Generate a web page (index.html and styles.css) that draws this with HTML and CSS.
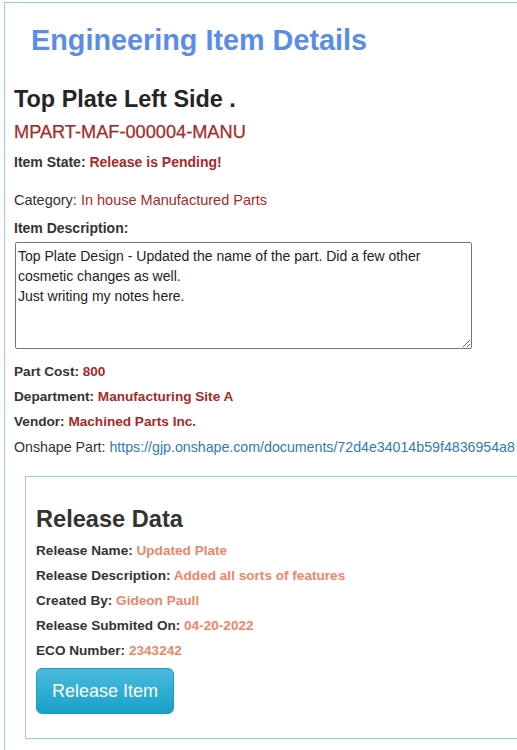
FILE: index.html
```html
<!DOCTYPE html>
<html>
<head>
<meta charset="utf-8">
<link rel="stylesheet" href="styles.css">
</head>
<body>
<div class="panel">
  <h1 class="title">Engineering Item Details</h1>
  <h3 class="item-name">Top Plate Left Side .</h3>
  <div class="item-number">MPART-MAF-000004-MANU</div>
  <div class="row bold state">Item State: <span class="val-red">Release is Pending!</span></div>
  <div class="row category">Category: <span class="val-red">In house Manufactured Parts</span></div>
  <div class="row bold desc-label">Item Description:</div>
  <textarea class="desc">Top Plate Design - Updated the name of the part. Did a few other cosmetic changes as well.
Just writing my notes here.</textarea>
  <div class="fields">
    <div class="row field semi">Part Cost: <span class="val-red">800</span></div>
    <div class="row field semi">Department: <span class="val-red">Manufacturing Site A</span></div>
    <div class="row field semi">Vendor: <span class="val-red">Machined Parts Inc.</span></div>
    <div class="row field onshape">Onshape Part: <a class="link" href="#">https://gjp.onshape.com/documents/72d4e34014b59f4836954a8</a></div>
  </div>
  <div class="release">
    <h3 class="release-title">Release Data</h3>
    <div class="rfield">Release Name: <span class="val-salmon">Updated Plate</span></div>
    <div class="rfield">Release Description: <span class="val-salmon">Added all sorts of features</span></div>
    <div class="rfield">Created By: <span class="val-salmon">Gideon Paull</span></div>
    <div class="rfield">Release Submited On: <span class="val-salmon">04-20-2022</span></div>
    <div class="rfield">ECO Number: <span class="val-salmon">2343242</span></div>
    <button class="btn">Release Item</button>
  </div>
</div>
</body>
</html>
```
FILE: styles.css
```css
html, body {
  margin: 0;
  padding: 0;
  overflow: hidden;
  background: #fff;
}
body {
  font-family: "Liberation Sans", Arial, sans-serif;
  color: #333;
  font-size: 14px;
}
.panel {
  margin: 2px 0 0 4px;
  width: 720px;
  min-height: 800px;
  border: 1px solid #99d1df;
  padding: 0 0 0 9px;
}
.title {
  margin: 21px 0 0 17px;
  font-size: 28.8px;
  line-height: 32px;
  font-weight: bold;
  color: #5b8de8;
}
.item-name {
  margin: 30px 0 0 0;
  font-size: 23.4px;
  line-height: 27px;
  font-weight: bold;
  color: #252525;
}
.item-number {
  margin-top: 9px;
  font-size: 18.2px;
  line-height: 20px;
  color: #a52a2a;
  -webkit-text-stroke: 0.25px #a52a2a;
}
.row {
  font-size: 14px;
  line-height: 20px;
}
.bold { font-weight: bold; }
.semi { font-weight: bold; font-size: 13.6px; }
.state { margin-top: 10px; }
.category { margin-top: 18px; font-size: 14.5px; }
.desc-label { margin-top: 8px; }
.val-red { color: #a52a2a; }
.val-salmon { color: #f0846a; }
.desc {
  display: block;
  margin-top: 4px;
  margin-left: 1px;
  width: 457px;
  height: 107px;
  box-sizing: border-box;
  border: 1px solid #767676;
  border-radius: 2px;
  padding: 3px 2px;
  font-family: "Liberation Sans", Arial, sans-serif;
  font-size: 14px;
  line-height: 20px;
  color: #222;
  resize: both;
}
.fields {
  margin-top: 13px;
  display: flex;
  flex-direction: column;
  gap: 5px;
}
.field { white-space: nowrap; }
.onshape { font-size: 14.2px; }
.link {
  color: #337ab7;
  text-decoration: none;
}
.release {
  margin: 19px 0 0 11px;
  border: 1px solid #99d1df;
  padding: 29px 0 24px 10px;
}
.release-title {
  margin: 0;
  font-size: 23.6px;
  line-height: 27px;
  font-weight: bold;
  color: #333;
}
.rfield {
  margin-top: 8px;
  font-size: 13.6px;
  line-height: 20px;
  font-weight: bold;
  margin-bottom: -3px;
}
.btn {
  display: block;
  margin-top: 10px;
  height: 46px;
  width: 138px;
  border: 1px solid #1f9bc4;
  border-radius: 6px;
  background: linear-gradient(#4bbbdd, #18a0ca);
  color: #fff;
  font-family: "Liberation Sans", Arial, sans-serif;
  font-size: 18px;
  padding: 0;
}
```
